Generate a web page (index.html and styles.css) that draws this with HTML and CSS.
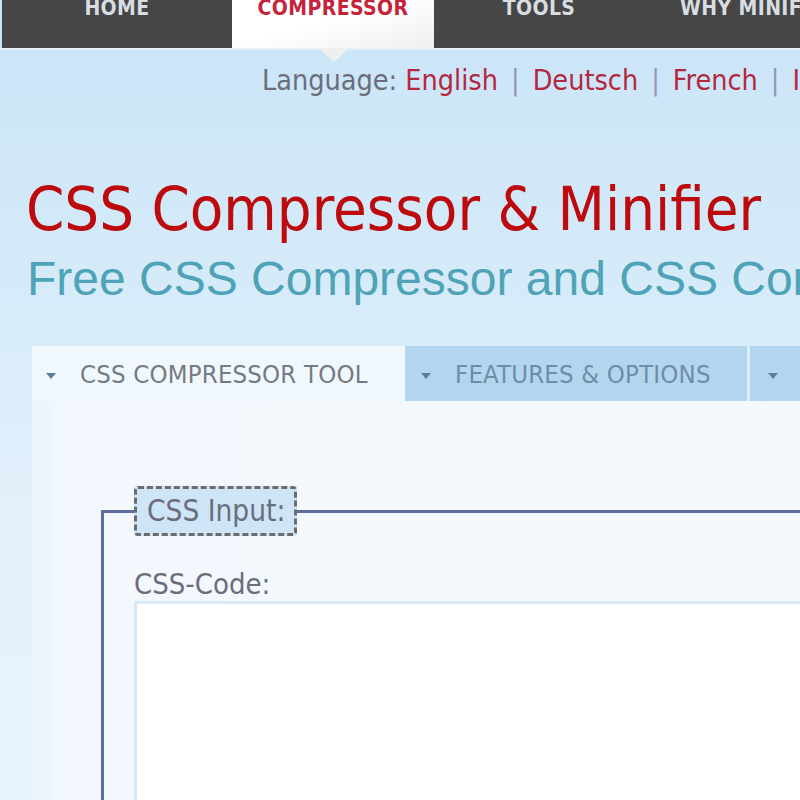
FILE: index.html
```html
<!DOCTYPE html>
<html>
<head>
<meta charset="utf-8">
<link rel="stylesheet" href="styles.css">
</head>
<body>
<div class="page">
  <nav class="nav">
    <div class="nav-item home"><span>HOME</span></div>
    <div class="nav-item active"><span>COMPRESSOR</span><i class="pointer"></i></div>
    <div class="nav-item tools"><span>TOOLS</span></div>
    <div class="nav-item why"><span>WHY MINIFY</span></div>
  </nav>
  <div class="lang">
    <span class="lang-label">Language:</span>
    <a class="lang-link">English</a><span class="sep">|</span><a class="lang-link">Deutsch</a><span class="sep">|</span><a class="lang-link">French</a><span class="sep">|</span><a class="lang-link">Italiano</a>
  </div>
  <h1 class="title">CSS Compressor &amp; Minifier</h1>
  <h2 class="subtitle">Free CSS Compressor and CSS Compression Tool</h2>
  <div class="tabs">
    <div class="tab tab-active"><span class="arrow"></span>CSS COMPRESSOR TOOL</div>
    <div class="tab tab-features"><span class="arrow"></span>FEATURES &amp; OPTIONS</div>
    <div class="tab"><span class="arrow"></span>ABOUT</div>
  </div>
  <div class="panel">
    <fieldset class="fs">
      <legend class="legend">CSS Input:</legend>
      <label class="code-label">CSS-Code:</label>
      <div class="textarea"></div>
    </fieldset>
  </div>
</div>
</body>
</html>
```
FILE: styles.css
```css
html, body {
  margin: 0;
  padding: 0;
}
body {
  width: 800px;
  height: 800px;
  overflow: hidden;
  background: linear-gradient(180deg, #c9e4f8 0px, #d4eaf9 250px, #e2f0fb 500px, #e8f3fc 800px);
  font-family: "DejaVu Sans Condensed", "DejaVu Sans", sans-serif;
}
.page {
  width: 800px;
  position: relative;
}
.nav {
  display: flex;
  height: 48px;
  padding-left: 2px;
  border-bottom: 2px solid #e4eff6;
  background: #c9e4f8;
}
.nav-item {
  position: relative;
  flex-shrink: 0;
  background: #464646;
  display: flex;
  justify-content: center;
  align-items: flex-start;
  color: #d8dde2;
  font-weight: bold;
  font-size: 21px;
  line-height: 16px;
  letter-spacing: 0.4px;
}
.nav-item span {
  display: block;
}
.home { width: 230px; }
.active {
  width: 202px;
  background: linear-gradient(165deg, #ffffff 45%, #efefef 100%);
  color: #c3243c;
}
.tools { width: 210px; }
.why { width: 200px; justify-content: flex-start; padding-left: 36px; }
.pointer {
  position: absolute;
  left: 87px;
  bottom: -14px;
  width: 0;
  height: 0;
  border-left: 15px solid transparent;
  border-right: 15px solid transparent;
  border-top: 14px solid #efefef;
}
.lang {
  padding-left: 262px;
  margin-top: 13px;
  font-size: 28.5px;
  line-height: 36px;
  white-space: nowrap;
  color: #6b6e7a;
}
.lang-label { margin-right: 0; }
.lang-link {
  color: #b4283f;
  text-decoration: none;
}
.sep {
  color: #8d98b4;
  margin: 0 13px;
}
.title {
  margin: 74px 0 0 26px;
  font-size: 61px;
  line-height: 72px;
  font-weight: normal;
  color: #bd0a0d;
  white-space: nowrap;
}
.subtitle {
  margin: 4px 0 0 27px;
  font-family: "Liberation Sans", Arial, sans-serif;
  font-weight: normal;
  font-size: 48px;
  line-height: 60px;
  color: #4ea3b6;
  white-space: nowrap;
}
.tabs {
  display: flex;
  gap: 3px;
  margin: 37px 0 0 32px;
  height: 55px;
  white-space: nowrap;
}
.tab {
  flex-shrink: 0;
  display: flex;
  align-items: center;
  background: #b3d6ee;
  color: #6f8ca8;
  font-size: 25.5px;
  padding: 0 33px 0 18px;
  letter-spacing: 0.2px;
}
.tab-active {
  background: #f1f8fd;
  color: #757b82;
  width: 373px;
  box-sizing: border-box;
  padding-left: 14px;
  margin-right: -3px;
}
.tab-features {
  width: 342px;
  box-sizing: border-box;
  padding-left: 16px;
}
.arrow {
  width: 0;
  height: 0;
  border-left: 5px solid transparent;
  border-right: 5px solid transparent;
  border-top: 6px solid #5e7d9a;
  margin-right: 24px;
  margin-top: 4px;
}
.panel {
  margin-left: 32px;
  background: linear-gradient(90deg, #e8f3fc 0px, #f2f8fd 30px, #f4f9fd 100%);
  height: 420px;
  padding: 85px 0 0 69px;
}
.fs {
  margin: 0;
  border: 0;
  border-top: 3px solid #5d6fa1;
  border-left: 3px solid #5d6fa1;
  padding: 32px 0 0 30px;
  min-width: 0;
}
.legend {
  background: #cde5f7;
  border: 3px dashed #6c6c6c;
  border-radius: 4px;
  color: #6b6e7a;
  font-size: 29.5px;
  line-height: 36px;
  padding: 4px 9px 4px 10px;
  margin-left: 0;
}
.code-label {
  display: block;
  color: #6b6e7a;
  font-size: 29px;
  line-height: 32px;
  margin-bottom: 1px;
}
.textarea {
  height: 300px;
  background: #ffffff;
  border: 3px solid #d6e9f7;
  border-right: 0;
}
```
